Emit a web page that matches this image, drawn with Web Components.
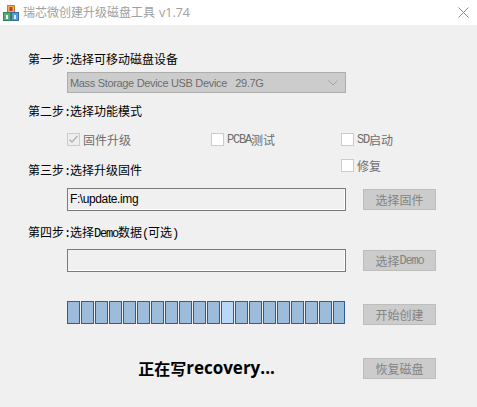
<!DOCTYPE html>
<html lang="zh-CN"><head><meta charset="utf-8"><title>瑞芯微创建升级磁盘工具</title>
<style>html,body{margin:0;background:#f0f0f0}body{width:477px;height:407px;overflow:hidden;font:12px "Noto Sans CJK SC",sans-serif}</style></head>
<body><app-window></app-window>
<script>
const cjk='"Noto Sans CJK SC","Noto Sans",sans-serif';
function def(name,css,html){
  customElements.define(name,class extends HTMLElement{
    constructor(){
      super();
      this.attachShadow({mode:'open'});
    }
    connectedCallback(){
      this.shadowRoot.innerHTML='<style>'+css+'</style>'+(typeof html==='function'?html(this):html);
    }
  });
}
def('title-bar',`:host{display:flex;align-items:center;height:25px;background:#fff;color:#a0a0a0;font:12px/14px ${cjk}}
 .i{margin:1px 4px 0 3px;flex:none}
 .t{flex:1;white-space:nowrap;margin-bottom:1px}
 .v{font:12.5px "Open Sans",sans-serif;margin-left:4px}
 .x{margin:0 8px 1px 0;flex:none}`,
 `<svg class="i" width="16" height="16" viewBox="0 0 16 16"><rect x="4.5" y=".5" width="7" height="7" fill="#eeb04e" stroke="#b9803a"/><rect x="6.5" y="2" width="3" height="4" fill="#c8382c"/><rect x=".5" y="7.5" width="7" height="8" fill="#57ad78" stroke="#3b7d62"/><rect x="8.5" y="7.5" width="7" height="8" fill="#5b9ad6" stroke="#2f6ca8"/><rect x="3" y="10" width="2" height="4" fill="#f3f7f3"/><rect x="11" y="10" width="2" height="4" fill="#dfeaf5"/></svg><span class="t"><slot></slot><span class="v">v1.74</span></span>
 <svg class="x" width="11" height="11" viewBox="0 0 11 11"><path d="M.5.5l10 10M10.5.5l-10 10" stroke="#8c8c8c" fill="none"/></svg>`);
def('lat-text',`:host{display:inline;font:12px "Liberation Mono",monospace;letter-spacing:-1.2px}`,'<slot></slot>');
def('step-label',`:host{display:block;height:14px;font:12px/14px ${cjk};color:#000;white-space:nowrap}`,'<slot></slot>');
def('combo-box',`:host{display:flex;align-items:center;box-sizing:border-box;height:21px;background:#ccc;border:1px solid #adadad;color:#6d6d6d;font:11px "Liberation Sans",sans-serif;letter-spacing:-.33px;padding-left:2px;white-space:pre}
 .s{flex:1}svg{margin-right:7px}`,
 `<span class="s"><slot></slot></span><svg width="10" height="6" viewBox="0 0 10 6"><path d="M.5.5L5 5 9.5.5" fill="none" stroke="#a3a3a3"/></svg>`);
def('check-box',`:host{display:flex;align-items:center;height:13px;font:12px/13px ${cjk};color:#6d6d6d;white-space:nowrap}
 .b{box-sizing:border-box;width:13px;height:13px;border:1px solid #ccc;background:#fff;margin-right:3px;flex:none;display:block}
 :host([checked]) .b{background:#eee}`,
 h=>`<svg class="b" viewBox="0 0 11 11">${h.hasAttribute('checked')?'<path d="M1.5 5.5L4 8l5.5-6" fill="none" stroke="#b0b0b0" stroke-width="1.3"/>':''}</svg><slot></slot>`);
def('text-edit',`:host{display:flex;align-items:center;box-sizing:border-box;height:23px;border:1px solid #7a7a7a;box-shadow:inset -1px -1px 0 #fff;padding:0 0 2px 2px;font:12px "Liberation Sans",sans-serif;letter-spacing:-.4px;color:#000;background:#f0f0f0}`,'<slot></slot>');
def('push-button',`:host{display:flex;align-items:center;justify-content:center;box-sizing:border-box;width:73px;height:21px;background:#ccc;border:1px solid #bdbdbd;color:#838383;font:12px/14px ${cjk};white-space:nowrap}`,'<slot></slot>');
def('progress-cells',`:host{display:flex;gap:1px;height:23px}
 i{display:block;box-sizing:border-box;width:13px;height:23px;background:#9dbcdb;border:1px solid #2e5d90}
 i:first-child,i:last-child{width:12px}i.on{background:#b9d7f9}`,
 ()=>Array.from({length:20},(_,k)=>`<i class="${k===11?'on':''}"></i>`).join(''));
def('status-text',`:host{display:flex;align-items:center;justify-content:center;height:21px;padding-bottom:1px;box-sizing:border-box;color:#000;font:bold 16px/20px ${cjk};white-space:nowrap}
 span{font:bold 17px/20px "Open Sans",sans-serif}`,'<slot></slot><span>recovery...</span>');
def('app-window',`:host{display:block;width:477px;height:407px;background:#f0f0f0}
 .g{display:grid;grid-template-columns:39px 279px 17px 73px;align-items:start;padding:27px 0 0 28px}
 .g>*{grid-column:2}
 .g>step-label{grid-column:1/-1}
 .g>push-button{grid-column:4}
 .chk{display:flex;grid-column:2/-1!important;margin-top:15px}
 .chk check-box:nth-child(1){width:144px}.chk check-box:nth-child(2){width:130px}
 .rep{grid-column:2/-1!important;grid-row:5;margin:13px 0 0 274px;justify-self:start}
 `,
 `<title-bar>瑞芯微创建升级磁盘工具</title-bar>
 <div class="g">
  <step-label style="grid-row:1">第一步<lat-text>:</lat-text>选择可移动磁盘设备</step-label>
  <combo-box style="grid-row:2;margin-top:6px">Mass Storage Device USB Device   29.7G</combo-box>
  <step-label style="grid-row:3;margin-top:11px">第二步<lat-text>:</lat-text>选择功能模式</step-label>
  <div class="chk" style="grid-row:4"><check-box checked>固件升级</check-box><check-box><lat-text>PCBA</lat-text>测试</check-box><check-box><lat-text>SD</lat-text>启动</check-box></div>
  <step-label style="grid-row:5;margin-top:17px">第三步<lat-text>:</lat-text>选择升级固件</step-label>
  <check-box class="rep">修复</check-box>
  <text-edit style="grid-row:6;margin-top:11px">F:\\update.img</text-edit>
  <push-button style="grid-row:6;margin-top:12px">选择固件</push-button>
  <step-label style="grid-row:7;margin-top:14px">第四步<lat-text>:</lat-text>选择<lat-text>Demo</lat-text>数据<lat-text>(</lat-text>可选<lat-text>)</lat-text></step-label>
  <text-edit style="grid-row:8;margin-top:10px"></text-edit>
  <push-button style="grid-row:8;margin-top:11px">选择<lat-text>Demo</lat-text></push-button>
  <progress-cells style="grid-row:9;margin-top:29px"></progress-cells>
  <push-button style="grid-row:9;margin-top:32px">开始创建</push-button>
  <status-text style="grid-row:10;margin-top:33px">正在写</status-text>
  <push-button style="grid-row:10;margin-top:33px">恢复磁盘</push-button>
 </div>`);
</script></body></html>
